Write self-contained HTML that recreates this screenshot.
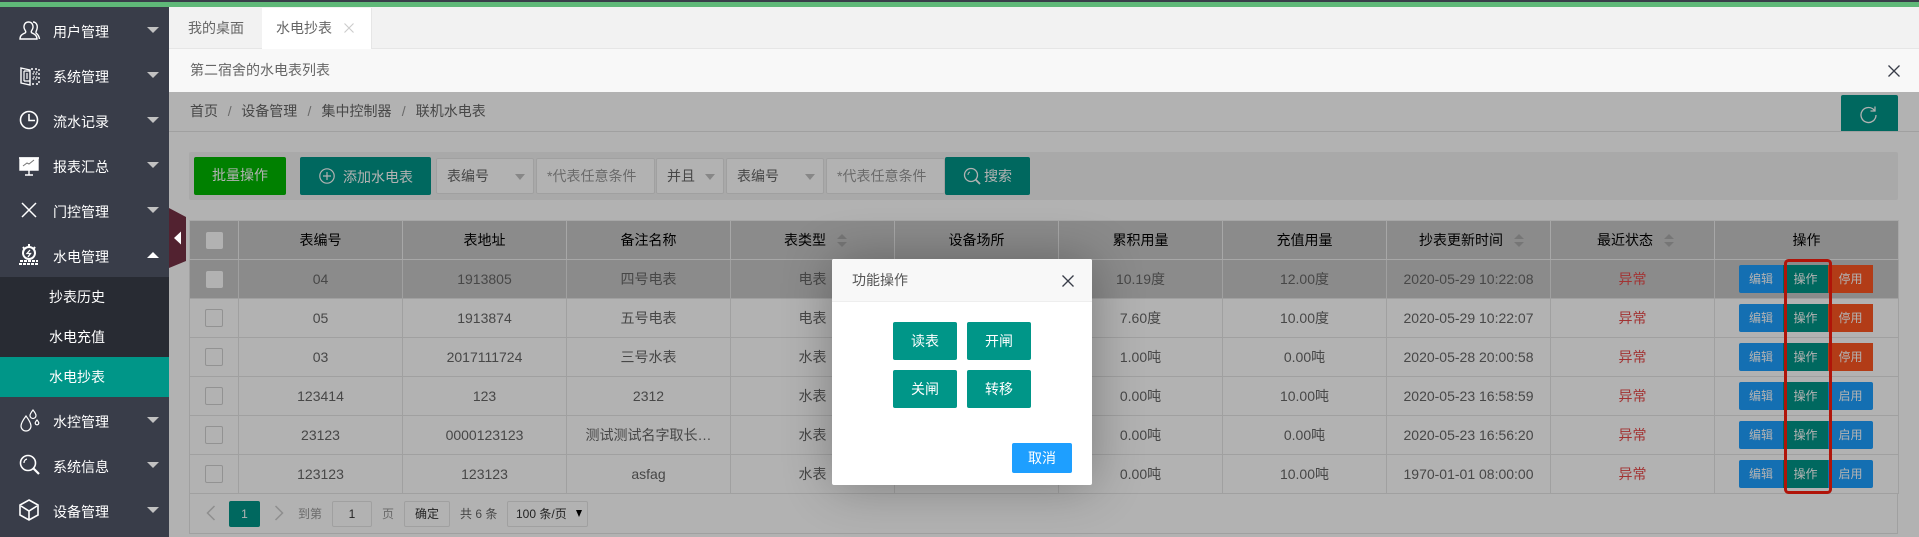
<!DOCTYPE html>
<html lang="zh"><head><meta charset="utf-8"><title>水电抄表</title>
<style>
*{box-sizing:border-box;margin:0;padding:0}
html,body{width:1919px;height:537px;overflow:hidden;background:#fff}
body{position:relative;font-family:"Liberation Sans","WenQuanYi Zen Hei","Noto Sans CJK SC",sans-serif;font-size:14px;color:#666}
.a{position:absolute;white-space:nowrap}
.top1{left:0;top:0;width:1919px;height:2px;background:#393d49}
.top2{left:0;top:2px;width:1919px;height:5px;background:#5fb878}
#side{left:0;top:7px;width:169px;height:530px;background:#393d49}
.mi{position:absolute;left:53px;color:#fff;line-height:20px;font-size:14px}
.ar{position:absolute;left:147px;width:0;height:0;border-left:6px solid transparent;border-right:6px solid transparent;border-top:6px solid #c2c2c2}
.sub{position:absolute;left:0;width:169px;height:40px;line-height:40px;padding-left:49px;color:#fff;background:#282b33}
.ic{position:absolute;left:17px;width:24px;height:24px;fill:none;stroke:#fff;stroke-width:1.4}
.tabs{left:169px;top:7px;width:1750px;height:42px;background:#f2f2f2;border-bottom:1px solid #e6e6e6}
.sh{left:169px;top:49px;width:1750px;height:43px;background:#f8f8f8}
.ov{left:169px;top:92px;width:1750px;height:445px;background:rgba(0,0,0,.3);z-index:5}
.btn{position:absolute;text-align:center;color:#fff;border-radius:2px}
.sel{position:absolute;top:158px;height:36px;line-height:34px;background:#fff;border:1px solid #e6e6e6;border-radius:2px;padding-left:10px;color:#666}
.sel i{position:absolute;top:15px;right:8px;width:0;height:0;border-left:5.5px solid transparent;border-right:5.5px solid transparent;border-top:6px solid #c2c2c2}
table{position:absolute;left:189px;top:220px;width:1709px;border-collapse:collapse;table-layout:fixed;font-size:14px;color:#666}
th,td{height:39px;border:1px solid #e6e6e6;text-align:center;font-weight:normal;padding:0}
th{background:#c8c8c8;color:#000;border-color:#f0f0f0}
th.st{padding-left:6px}
tr.hv td{background:#c8c8c8;border-color:#e6e6e6}
.cb{display:inline-block;width:18px;height:18px;border:1px solid #d2d2d2;border-radius:2px;background:#fff;vertical-align:middle}
.cbf{width:17px;height:17px;border:0;background:#fff}
.s{display:inline-block;position:relative;width:10px;height:13px;margin-left:11px;vertical-align:-2px}
.s:before,.s:after{content:"";position:absolute;left:0;border-left:5px solid transparent;border-right:5px solid transparent}
.s:before{top:0;border-bottom:5.5px solid #aaa}
.s:after{bottom:0;border-top:5.5px solid #aaa}
.r{color:#e84a4a}
.o{display:block;position:relative;margin-left:24px;width:134px;height:28px;font-size:12px;line-height:28px;color:#fff}
.o b{font-weight:normal;position:absolute;top:0;height:28px}
.o .x{left:0;width:44px;background:#1e9fff;border-radius:2px 0 0 2px}
.o .y{left:44px;width:45px;background:#009688}
.o .z{left:89px;width:45px;background:#ff5722}
.o .z.q{background:#1e9fff;border-radius:0 2px 2px 0}
.pg{position:absolute;left:189px;top:493px;width:1709px;height:41px;border:1px solid #e6e6e6;border-top:0;font-size:12px;color:#999}
.bx{position:absolute;top:8px;height:26px;line-height:24px;border:1px solid #e6e6e6;border-radius:2px;text-align:center;background:#fff;color:#333}
#md{left:832px;top:259px;width:260px;height:226px;background:#fff;border-radius:2px;box-shadow:1px 1px 50px rgba(0,0,0,.3);z-index:10}
#md .h{position:absolute;left:0;top:0;width:260px;height:43px;background:#f8f8f8;border-bottom:1px solid #eee;padding-left:20px;line-height:43px;color:#555;border-radius:2px 2px 0 0}
#md .btn{background:#009688;width:64px;height:38px;line-height:38px}
</style></head><body>
<div class="a top1"></div><div class="a top2"></div>

<div class="a" id="side">
<svg class="ic" style="top:12px" viewBox="0 0 24 24"><path d="M3 20c0-4 3-5 5-6 1-.5 1-1.500 0-3-2-3-1-8 3.500-8s5.500 5 3.500 8c-1 1.500-1 2.500 0 3 2 1 5 2 5 6z"/><path d="M16 3c3 0 5 3 4 7-.5 2-1.500 3-1 4 1 1 3 2 3.500 6"/></svg>
<svg class="ic" style="top:57px" viewBox="0 0 24 24"><path d="M4 4l9 2v15l-9-2z"/><path d="M7 7h6M7 17h6M7 7v10M10 9v6" stroke-width="1.200"/><path d="M14 5h8v15h-8" stroke-dasharray="2 2"/><path d="M16 8h4v2h-4zM16 13h4v2h-4z" stroke-dasharray="2 1" stroke-width="1"/></svg>
<svg class="ic" style="top:101px" viewBox="0 0 24 24"><circle cx="12" cy="12" r="8.500" stroke-width="1.600"/><path d="M12 6v6.500h6" stroke-width="1.600"/></svg>
<svg class="ic" style="top:146px" viewBox="0 0 24 24"><path d="M3 5h18v12H3z" fill="#fff"/><path d="M12 17v5M8 22h8M2 5h20" /><path d="M6 13l4-3 2 1 5-4" stroke="#777" stroke-width="1"/></svg>
<svg class="ic" style="top:192px" viewBox="0 0 24 24"><path d="M5 4l14 14M19 4L5 18" stroke-width="1.500"/></svg>
<svg class="ic" style="top:236px" viewBox="0 0 24 24"><circle cx="12" cy="10" r="6" stroke-width="2"/><path d="M12 1v3M6 4l1.500 2M18 4l-1.500 2" stroke-width="2"/><path d="M13 7l-3 3.500h3.500L11 14" stroke-width="1.300"/><path d="M3 18h18M2 21h20" stroke-width="2" stroke-dasharray="3 1"/></svg>
<div class="mi" style="top:15px">用户管理</div><div class="ar" style="top:20px"></div>
<div class="mi" style="top:60px">系统管理</div><div class="ar" style="top:65px"></div>
<div class="mi" style="top:105px">流水记录</div><div class="ar" style="top:110px"></div>
<div class="mi" style="top:150px">报表汇总</div><div class="ar" style="top:155px"></div>
<div class="mi" style="top:195px">门控管理</div><div class="ar" style="top:200px"></div>
<div class="mi" style="top:240px">水电管理</div><div class="ar" style="top:245px;border-top:0;border-bottom:6px solid #fff"></div>
<div class="sub" style="top:270px">抄表历史</div>
<div class="sub" style="top:310px">水电充值</div>
<div class="sub" style="top:350px;background:#009688">水电抄表</div>
<svg class="ic" style="top:402px" viewBox="0 0 24 24"><path d="M9 7c3 4 5 7 5 10a5 5 0 0 1-10 0c0-3 2-6 5-10z" stroke-width="1.200"/><path d="M16 1c2 2.500 3 4 3 5.500a3 3 0 0 1-6 0C13 5 14 3.500 16 1z" stroke-width="1.200"/><path d="M20 11c1 1.200 1.800 2.200 1.800 3a1.800 1.800 0 0 1-3.600 0c0-.8.800-1.800 1.800-3z" stroke-width="1.200"/></svg>
<svg class="ic" style="top:446px" viewBox="0 0 24 24"><circle cx="11" cy="10" r="7.500" stroke-width="1.600"/><path d="M16.500 15.500l5.500 5.500" stroke-width="2.200"/><path d="M7 10c0-2 1-3.500 3-4" stroke-width="1.200"/></svg>
<svg class="ic" style="top:491px" viewBox="0 0 24 24"><path d="M12 2l9 5v10l-9 5-9-5V7z" stroke-width="1.600"/><path d="M4 8l8 5 8-5M12 13v8" stroke-width="1.600"/></svg>
<div class="mi" style="top:405px">水控管理</div><div class="ar" style="top:410px"></div>
<div class="mi" style="top:450px">系统信息</div><div class="ar" style="top:455px"></div>
<div class="mi" style="top:495px">设备管理</div><div class="ar" style="top:500px"></div>
</div>

<div class="a tabs"></div>
<div class="a" style="left:262px;top:8px;width:110px;height:41px;background:#fff;border-right:1px solid #e6e6e6"></div>
<div class="a" style="left:188px;top:18px;line-height:20px;color:#666">我的桌面</div>
<div class="a" style="left:276px;top:18px;line-height:20px;color:#666">水电抄表</div>
<svg class="a" style="left:344px;top:23px" width="10" height="10" viewBox="0 0 10 10"><path d="M.5.500l9 9M9.500.500l-9 9" stroke="#ccc" stroke-width="1.100"/></svg>
<div class="a sh"></div>
<div class="a" style="left:190px;top:60px;line-height:20px;color:#666">第二宿舍的水电表列表</div>
<svg class="a" style="left:1888px;top:65px" width="12" height="12" viewBox="0 0 12 12"><path d="M.5.500l11 11M11.500.500l-11 11" stroke="#393d49" stroke-width="1.300"/></svg>

<div class="a" style="left:190px;top:101px;line-height:20px;color:#666;word-spacing:0">首页<span style="margin:0 9.7px;color:#999">/</span>设备管理<span style="margin:0 10.2px;color:#999">/</span>集中控制器<span style="margin:0 10.2px;color:#999">/</span>联机水电表</div>
<div class="a" style="left:169px;top:131px;width:1750px;height:1px;background:#e6e6e6"></div>
<div class="a" style="left:1841px;top:95px;width:57px;height:36px;background:#009688;border-radius:2px 2px 0 0"></div>
<svg class="a" style="left:1859px;top:106px" width="20" height="18" viewBox="0 0 20 18" fill="none" stroke="#fff" stroke-width="1.300"><path d="M15.500 4.500A7.500 7.500 0 1 0 17 9"/><path d="M16 .5v4.500h-4.500"/></svg>

<div class="a" style="left:189px;top:152px;width:1709px;height:48px;background:#f2f2f2;border-radius:2px"></div>
<div class="btn" style="left:194px;top:157px;width:92px;height:38px;line-height:37px;background:#00b800">批量操作</div>
<div class="btn" style="left:300px;top:157px;width:131px;height:38px;line-height:41px;background:#009688;padding-left:25px">添加水电表</div>
<svg class="a" style="left:319px;top:168px" width="16" height="16" viewBox="0 0 16 16" fill="none" stroke="#fff" stroke-width="1.200"><circle cx="8" cy="8" r="7.200"/><path d="M8 4v8M4 8h8"/></svg>
<div class="sel" style="left:436px;width:98px">表编号<i></i></div>
<div class="sel" style="left:536px;width:119px;color:#999">*代表任意条件</div>
<div class="sel" style="left:656px;width:68px">并且<i></i></div>
<div class="sel" style="left:726px;width:98px">表编号<i></i></div>
<div class="sel" style="left:826px;width:119px;color:#999">*代表任意条件</div>
<div class="btn" style="left:945px;top:157px;width:85px;height:38px;line-height:38px;background:#009688;padding-left:21px">搜索</div>
<svg class="a" style="left:963px;top:167px" width="18" height="18" viewBox="0 0 18 18" fill="none" stroke="#fff"><circle cx="8" cy="8" r="6.500" stroke-width="1.300"/><path d="M12.500 12.500l4.500 4.500" stroke-width="1.800"/><path d="M5 8c0-1.500.8-2.600 2-3"/></svg>

<table>
<colgroup><col style="width:49px"><col style="width:164px"><col style="width:164px"><col style="width:164px"><col style="width:164px"><col style="width:164px"><col style="width:164px"><col style="width:164px"><col style="width:164px"><col style="width:164px"><col style="width:184px"></colgroup>
<tr><th><span class="cb cbf"></span></th><th>表编号</th><th>表地址</th><th>备注名称</th><th class="st">表类型<i class="s"></i></th><th>设备场所</th><th>累积用量</th><th>充值用量</th><th class="st">抄表更新时间<i class="s"></i></th><th class="st">最近状态<i class="s"></i></th><th>操作</th></tr>
<tr class="hv"><td><span class="cb cbf"></span></td><td>04</td><td>1913805</td><td>四号电表</td><td>电表</td><td></td><td>10.19度</td><td>12.00度</td><td>2020-05-29 10:22:08</td><td class="r">异常</td><td><span class="o"><b class="x">编辑</b><b class="y">操作</b><b class="z">停用</b></span></td></tr>
<tr><td><span class="cb"></span></td><td>05</td><td>1913874</td><td>五号电表</td><td>电表</td><td></td><td>7.60度</td><td>10.00度</td><td>2020-05-29 10:22:07</td><td class="r">异常</td><td><span class="o"><b class="x">编辑</b><b class="y">操作</b><b class="z">停用</b></span></td></tr>
<tr><td><span class="cb"></span></td><td>03</td><td>2017111724</td><td>三号水表</td><td>水表</td><td></td><td>1.00吨</td><td>0.00吨</td><td>2020-05-28 20:00:58</td><td class="r">异常</td><td><span class="o"><b class="x">编辑</b><b class="y">操作</b><b class="z">停用</b></span></td></tr>
<tr><td><span class="cb"></span></td><td>123414</td><td>123</td><td>2312</td><td>水表</td><td></td><td>0.00吨</td><td>10.00吨</td><td>2020-05-23 16:58:59</td><td class="r">异常</td><td><span class="o"><b class="x">编辑</b><b class="y">操作</b><b class="z q">启用</b></span></td></tr>
<tr><td><span class="cb"></span></td><td>23123</td><td>0000123123</td><td>测试测试名字取长…</td><td>水表</td><td></td><td>0.00吨</td><td>0.00吨</td><td>2020-05-23 16:56:20</td><td class="r">异常</td><td><span class="o"><b class="x">编辑</b><b class="y">操作</b><b class="z q">启用</b></span></td></tr>
<tr><td><span class="cb"></span></td><td>123123</td><td>123123</td><td>asfag</td><td>水表</td><td></td><td>0.00吨</td><td>10.00吨</td><td>1970-01-01 08:00:00</td><td class="r">异常</td><td><span class="o"><b class="x">编辑</b><b class="y">操作</b><b class="z q">启用</b></span></td></tr>
</table>

<div class="pg">
<svg class="a" style="left:16px;top:11px" width="10" height="18" viewBox="0 0 10 18" fill="none" stroke="#ccc" stroke-width="1.500"><path d="M8.500 2l-7 7 7 7"/></svg>
<div class="btn" style="left:39px;top:8px;width:31px;height:26px;line-height:26px;background:#009688">1</div>
<svg class="a" style="left:84px;top:11px" width="10" height="18" viewBox="0 0 10 18" fill="none" stroke="#ccc" stroke-width="1.500"><path d="M1.500 2l7 7-7 7"/></svg>
<div class="a" style="left:108px;top:12px;line-height:18px">到第</div>
<div class="bx" style="left:142px;width:40px">1</div>
<div class="a" style="left:192px;top:12px;line-height:18px">页</div>
<div class="bx" style="left:214px;width:46px;color:#333">确定</div>
<div class="a" style="left:270px;top:12px;line-height:18px;color:#666">共 6 条</div>
<div class="bx" style="left:317px;width:81px;color:#333;text-align:left;padding-left:8px">100 条/页<span style="position:absolute;right:5px;top:8px;width:0;height:0;border-left:3.500px solid transparent;border-right:3.500px solid transparent;border-top:7px solid #000"></span></div>
</div>

<svg class="a" style="left:1784px;top:259px" width="49" height="235" viewBox="0 0 49 235"><rect x="1.500" y="1.500" width="45" height="232" rx="3" fill="none" stroke="#fc1e0e" stroke-width="3"/></svg>

<div class="a ov"></div>

<svg class="a" style="left:169px;top:207px;z-index:6" width="18" height="61" viewBox="0 0 18 61"><path d="M0 1l17 9v44L0 61z" fill="#522230"/><path d="M5 31l7-6.500v13z" fill="#fff"/></svg>

<div class="a" id="md">
<div class="h">功能操作</div>
<svg class="a" style="left:230px;top:16px" width="12" height="12" viewBox="0 0 12 12"><path d="M.5.500l11 11M11.500.500l-11 11" stroke="#393d49" stroke-width="1.300"/></svg>
<div class="btn" style="left:61px;top:63px">读表</div>
<div class="btn" style="left:135px;top:63px">开闸</div>
<div class="btn" style="left:61px;top:111px">关闸</div>
<div class="btn" style="left:135px;top:111px">转移</div>
<div class="btn" style="left:180px;top:184px;width:60px;height:30px;line-height:30px;background:#1e9fff">取消</div>
</div>
</body></html>
